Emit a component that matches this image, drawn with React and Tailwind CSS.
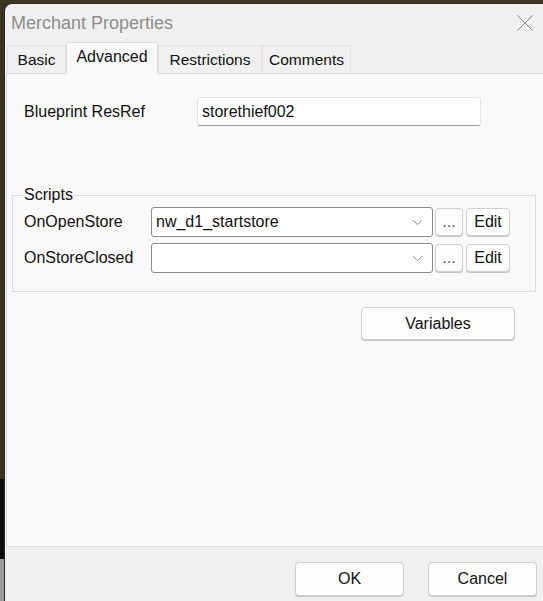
import { ChevronDown, X } from 'lucide-react';

const ui = { fontFamily: '"Liberation Sans", Arial, sans-serif' };

const Tab = ({ label, active, w }) => (
  <div
    className={
      active
        ? `h-[32px] flex items-center justify-center bg-[#f9f9f9] border border-b-0 border-[#dcdcdc] relative top-[1px] text-[16px] text-[#111] pb-[4px] ${w}`
        : `h-[28px] flex items-center justify-center bg-[#f0f0f0] border border-b-0 border-[#e2e2e2] text-[15.5px] text-[#111] ${w}`
    }
  >
    {label}
  </div>
);

const Btn = ({ children, className = '' }) => (
  <div
    className={`flex items-center justify-center bg-[#fdfdfd] border border-[#d0d0d0] rounded-[4px] text-[16px] text-[#111] shadow-[0_1px_0_#c4c4c4] ${className}`}
  >
    {children}
  </div>
);

const ScriptRow = ({ label, value }) => (
  <div className="flex items-center h-[30px]">
    <div className="w-[127px] text-[16px] text-[#111]">{label}</div>
    <div className="w-[282px] h-[30px] bg-white border border-[#8c8c8c] rounded-[3px] flex items-center pl-[4px] pr-[6px]">
      <span className="flex-1 text-[16px] text-[#111]">{value}</span>
      <ChevronDown size={17} strokeWidth={1.1} className="text-[#666]" />
    </div>
    <Btn className="ml-[2px] w-[28px] h-[28px] text-[13px] text-[#555]">...</Btn>
    <Btn className="ml-[3px] w-[44px] h-[28px]">Edit</Btn>
  </div>
);

export default function App() {
  return (
    <div className="w-[543px] h-[601px] bg-[#37321f] flex flex-col overflow-hidden" style={ui}>
      <div className="h-[3px] bg-[#3d3721]" />
      <div className="flex flex-1 min-h-0">
        <div className="w-[4px] flex flex-col">
          <div className="flex-1 bg-[#3a3520]" />
          <div className="h-[80px] bg-[#0c0c0c]" />
          <div className="h-[42px] bg-[#9b9b9b]" />
        </div>
        <div className="flex-1 bg-[#f0f0f0] rounded-tl-[8px] border-l border-t border-[#2a2a2a] flex flex-col">
          <div className="h-[38px] flex items-center justify-between pl-[6px] pr-[3px]">
            <span className="text-[18px] text-[#8e8e8e]">Merchant Properties</span>
            <X size={30} strokeWidth={0.7} className="text-[#7a7a7a]" />
          </div>
          <div className="flex items-end pl-[2px] h-[31px]">
            <Tab label="Basic" w="w-[59px]" />
            <Tab label="Advanced" w="w-[92px]" active />
            <Tab label="Restrictions" w="w-[104px]" />
            <Tab label="Comments" w="w-[89px]" />
          </div>
          <div className="h-[474px] ml-[1px] bg-[#f9f9f9] border border-r-0 border-[#dcdcdc] flex flex-col">
            <div className="flex items-center mt-[23px] pl-[17px]">
              <div className="w-[173px] text-[16px] text-[#111]">Blueprint ResRef</div>
              <div className="w-[284px] h-[29px] bg-white border border-[#e4e4e4] border-b-[#9a9a9a] rounded-[3px] flex items-center pl-[4px] text-[16px] text-[#111]">
                storethief002
              </div>
            </div>
            <div className="relative mt-[69px] ml-[5px] w-[524px] h-[97px] border border-[#dcdcdc] pl-[11px] pt-[11px] flex flex-col gap-[6px]">
              <span className="absolute -top-[10px] left-[11px] bg-[#f9f9f9] text-[16px] leading-[18px] text-[#111] pr-[1px]">
                Scripts
              </span>
              <ScriptRow label="OnOpenStore" value="nw_d1_startstore" />
              <ScriptRow label="OnStoreClosed" value="" />
            </div>
            <div className="flex justify-end pr-[28px] mt-[15px]">
              <Btn className="w-[154px] h-[33px]">Variables</Btn>
            </div>
          </div>
          <div className="flex-1 flex justify-end items-start gap-[24px] pt-[15px] pr-[6px]">
            <Btn className="w-[109px] h-[34px]">OK</Btn>
            <Btn className="w-[109px] h-[34px]">Cancel</Btn>
          </div>
        </div>
      </div>
    </div>
  );
}
